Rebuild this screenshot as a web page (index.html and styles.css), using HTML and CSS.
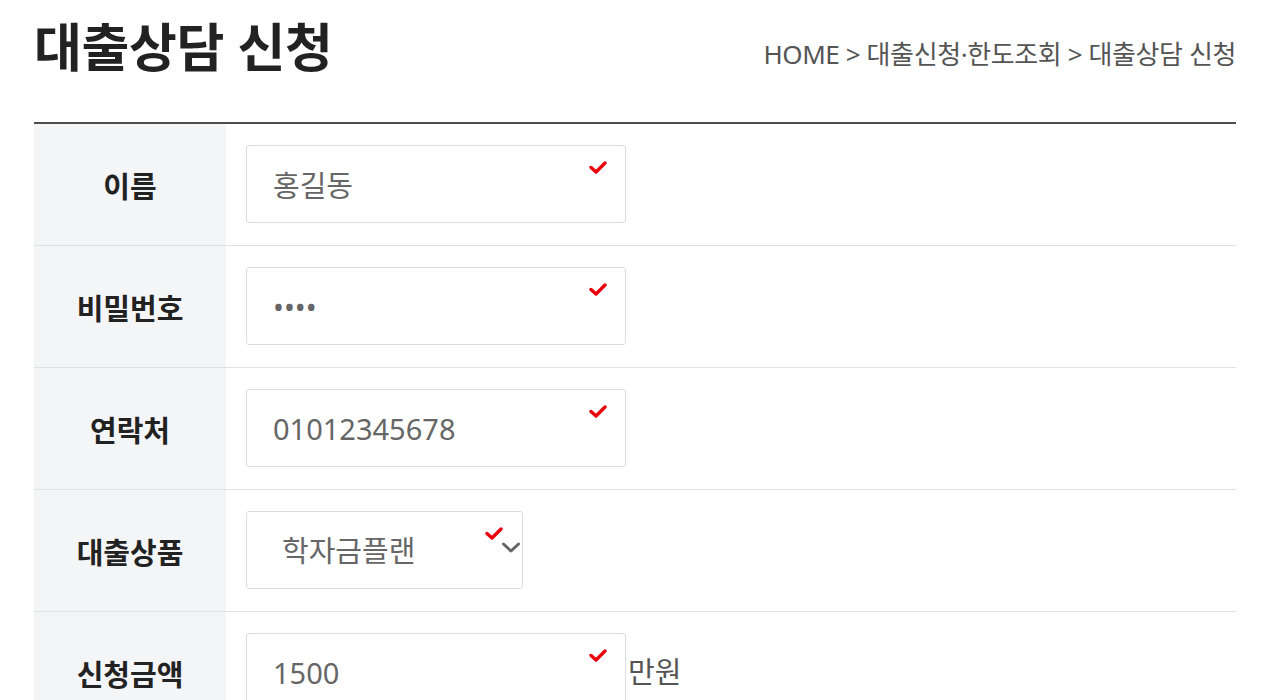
FILE: index.html
```html
<!DOCTYPE html>
<html lang="ko">
<head>
<meta charset="utf-8">
<title>대출상담 신청</title>
<link rel="stylesheet" href="styles.css">
</head>
<body>
<div class="page">
  <div class="head">
    <h1 class="title">대출상담 신청</h1>
    <div class="crumb">HOME &gt; 대출신청·한도조회 &gt; 대출상담 신청</div>
  </div>
  <div class="form">
    <div class="row">
      <div class="label">이름</div>
      <div class="cell">
        <div class="field">
          <input class="input" type="text" value="홍길동">
          <svg class="check" width="18" height="14" viewBox="0 0 18 14"><path d="M2 6.5 L7 11 L16 2" fill="none" stroke="#e8000b" stroke-width="3.4" stroke-linecap="round" stroke-linejoin="round"/></svg>
        </div>
      </div>
    </div>
    <div class="row">
      <div class="label">비밀번호</div>
      <div class="cell">
        <div class="field">
          <input class="input" type="password" value="1234">
          <svg class="check" width="18" height="14" viewBox="0 0 18 14"><path d="M2 6.5 L7 11 L16 2" fill="none" stroke="#e8000b" stroke-width="3.4" stroke-linecap="round" stroke-linejoin="round"/></svg>
        </div>
      </div>
    </div>
    <div class="row">
      <div class="label">연락처</div>
      <div class="cell">
        <div class="field">
          <input class="input" type="text" value="01012345678">
          <svg class="check" width="18" height="14" viewBox="0 0 18 14"><path d="M2 6.5 L7 11 L16 2" fill="none" stroke="#e8000b" stroke-width="3.4" stroke-linecap="round" stroke-linejoin="round"/></svg>
        </div>
      </div>
    </div>
    <div class="row">
      <div class="label">대출상품</div>
      <div class="cell">
        <div class="field">
          <select class="select">
            <option>학자금플랜</option>
          </select>
          <svg class="check check-sel" width="18" height="14" viewBox="0 0 18 14"><path d="M2 6.5 L7 11 L16 2" fill="none" stroke="#e8000b" stroke-width="3.4" stroke-linecap="round" stroke-linejoin="round"/></svg>
          <svg class="chev" width="20" height="11" viewBox="0 0 20 11"><path d="M2.5 2 L10 9 L17.5 2" fill="none" stroke="#666" stroke-width="3" stroke-linecap="round" stroke-linejoin="round"/></svg>
        </div>
      </div>
    </div>
    <div class="row">
      <div class="label">신청금액</div>
      <div class="cell">
        <div class="field">
          <input class="input" type="text" value="1500">
          <svg class="check" width="18" height="14" viewBox="0 0 18 14"><path d="M2 6.5 L7 11 L16 2" fill="none" stroke="#e8000b" stroke-width="3.4" stroke-linecap="round" stroke-linejoin="round"/></svg>
        </div>
        <span class="unit">만원</span>
      </div>
    </div>
  </div>
</div>
</body>
</html>
```

FILE: styles.css
```css
* { box-sizing: border-box; }
html, body { margin: 0; padding: 0; background: #fff; }
body {
  font-family: "Noto Sans", "Noto Sans CJK KR", sans-serif;
  color: #222;
}
.page {
  width: 1202px;
  margin-left: 34px;
  padding-top: 19px;
}
.head {
  display: flex;
  justify-content: space-between;
  align-items: flex-start;
  height: 58px;
  margin-bottom: 45px;
}
.title {
  margin: -2px 0 0;
  font-size: 52px;
  line-height: 60px;
  font-weight: 700;
  color: #222;
  letter-spacing: -0.3px;
}
.crumb {
  margin-top: 20px;
  font-size: 26px;
  line-height: 30px;
  color: #555;
  letter-spacing: -0.4px;
}
.form {
  border-top: 2px solid #4d4d4d;
}
.row {
  display: grid;
  grid-template-columns: 192px 1fr;
  border-bottom: 1px solid #e2e2e2;
}
.label {
  background: #f4f5f7;
  display: flex;
  align-items: center;
  justify-content: center;
  font-size: 29px;
  font-weight: 700;
  color: #222;
}
.cell {
  display: flex;
  align-items: center;
  padding: 21px 20px 22px;
}
.field {
  position: relative;
  display: inline-block;
}
.input, .select {
  display: block;
  height: 78px;
  border: 1px solid #dcdcdc;
  border-radius: 3px;
  background: #fff;
  font-family: "Noto Sans", "Noto Sans CJK KR", sans-serif;
  font-size: 29px;
  color: #666;
  outline: none;
}
.input {
  width: 380px;
  padding: 0 26px;
}
.select {
  width: 277px;
  padding: 0 40px 0 35px;
  appearance: none;
  -webkit-appearance: none;
}
.check {
  position: absolute;
  top: 16px;
  right: 19px;
}
.check-sel {
  right: 20px;
  top: 16px;
}
.chev {
  position: absolute;
  right: 2px;
  top: 31px;
}
.unit {
  margin-left: 2px;
  font-size: 29px;
  color: #555;
  align-self: center;
  margin-top: -4px;
}
```
